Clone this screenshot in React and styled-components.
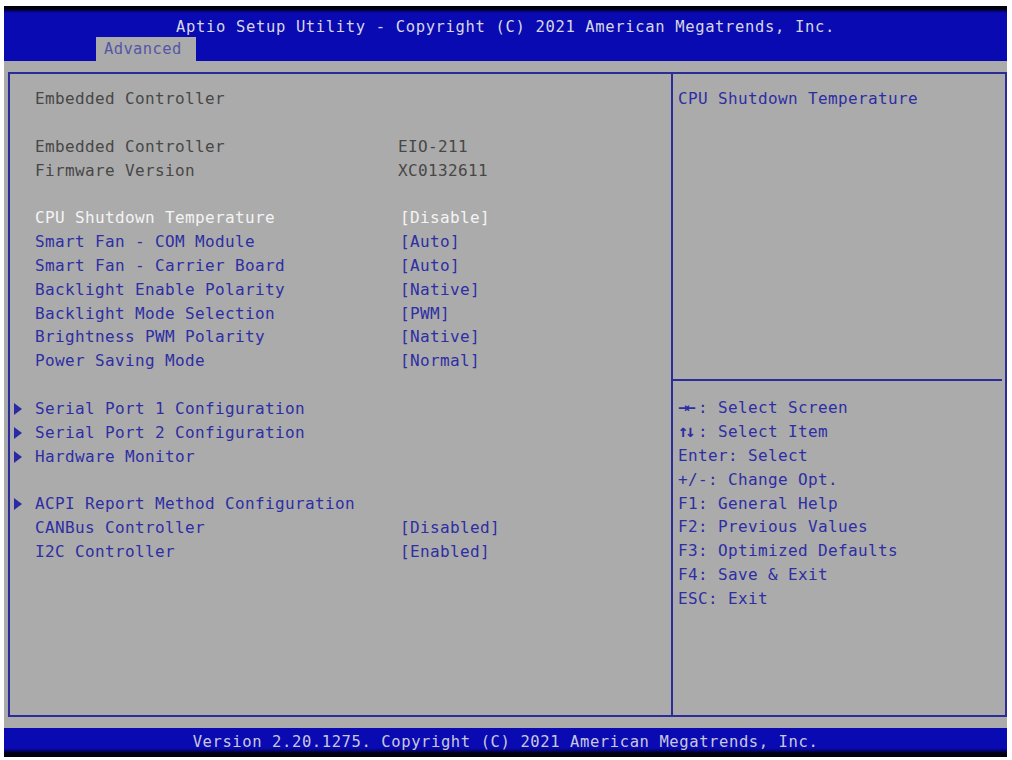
import React from 'react';
import styled, { createGlobalStyle } from 'styled-components';

const GlobalStyle = createGlobalStyle`
  html, body {
    margin: 0;
    padding: 0;
    background: #ffffff;
  }
  body {
    font-family: 'DejaVu Sans Mono', 'Liberation Mono', monospace;
  }
`;

const BLUE = '#0a0ab2';
const GRAY = '#ababab';
const LINE = '#2c2c98';

const Page = styled.div`
  width: 1012px;
  height: 760px;
  padding: 6px 5px 3px 4px;
  box-sizing: border-box;
  background: #fff;
`;

const Screen = styled.div`
  height: 100%;
  display: flex;
  flex-direction: column;
  background: ${GRAY};
  font-family: 'DejaVu Sans Mono', 'Liberation Mono', monospace;
  font-size: 16px;
  letter-spacing: 0.37px;
`;

const Header = styled.header`
  height: 55px;
  background: linear-gradient(#000008 0px, #000010 3px, #03036a 5px, ${BLUE} 7px, ${BLUE} 100%);
  display: flex;
  flex-direction: column;
`;

const Title = styled.div`
  height: 31px;
  line-height: 42px;
  text-align: center;
  color: #d6d6e6;
  font-size: 15.5px;
  letter-spacing: 0.65px;
`;

const TabRow = styled.div`
  flex: 1;
  display: flex;
  align-items: flex-end;
  padding-left: 92px;
`;

const Tab = styled.div`
  width: 100px;
  height: 24px;
  box-sizing: border-box;
  padding-left: 8px;
  line-height: 24px;
  background: ${GRAY};
  color: #5656a6;
  font-size: 15.5px;
`;

const Body = styled.main`
  flex: 1;
  padding: 11px 0 11px 4px;
`;

const Frame = styled.div`
  height: 100%;
  box-sizing: border-box;
  border: 2px solid ${LINE};
  display: grid;
  grid-template-columns: 663px 1fr;
`;

const MainPane = styled.section`
  border-right: 2px solid ${LINE};
  padding: 13px 0 0 0;
`;

const Row = styled.div`
  height: 23.85px;
  line-height: 23.85px;
  display: grid;
  grid-template-columns: 25px 361px 1fr;
  align-items: center;
  white-space: pre;
  color: ${(p) => (p.$selected ? '#f4f4f4' : p.$option ? '#2e2ea4' : '#474747')};
`;

const Arrow = styled.span`
  display: block;
  width: 0;
  height: 0;
  margin-left: 4px;
  border-top: 6px solid transparent;
  border-bottom: 6px solid transparent;
  border-left: 8px solid #2a2aa6;
`;

const Value = styled.span`
  padding-left: ${(p) => (p.$bracket ? '4px' : '2px')};
`;

const SidePane = styled.aside`
  display: flex;
  flex-direction: column;
`;

const HelpTop = styled.div`
  height: 307px;
  padding: 13px 0 0 5px;
  box-sizing: border-box;
  border-bottom: 2px solid ${LINE};
  margin-right: 3px;
  color: #2e2ea4;
  line-height: 23.85px;
`;

const KeyList = styled.div`
  padding: 15px 0 0 5px;
  color: #2e2ea4;
`;

const KeyLine = styled.div`
  height: 23.9px;
  line-height: 23.9px;
  white-space: pre;
`;

const Glyph = styled.span`
  display: inline-block;
  width: 20px;
  font-size: 17px;
  font-weight: bold;
  letter-spacing: -3px;
`;

const Footer = styled.footer`
  height: 29px;
  background: linear-gradient(${BLUE} 0px, ${BLUE} 20px, #03036a 23px, #000010 25px, #000008 29px);
  color: #c8c8dc;
  text-align: center;
  line-height: 29px;
  font-size: 15.5px;
  letter-spacing: 0.6px;
`;

const rows = [
  { label: 'Embedded Controller' },
  { blank: true },
  { label: 'Embedded Controller', value: 'EIO-211' },
  { label: 'Firmware Version', value: 'XC0132611' },
  { blank: true },
  { label: 'CPU Shutdown Temperature', value: '[Disable]', option: true, selected: true },
  { label: 'Smart Fan - COM Module', value: '[Auto]', option: true },
  { label: 'Smart Fan - Carrier Board', value: '[Auto]', option: true },
  { label: 'Backlight Enable Polarity', value: '[Native]', option: true },
  { label: 'Backlight Mode Selection', value: '[PWM]', option: true },
  { label: 'Brightness PWM Polarity', value: '[Native]', option: true },
  { label: 'Power Saving Mode', value: '[Normal]', option: true },
  { blank: true },
  { label: 'Serial Port 1 Configuration', option: true, sub: true },
  { label: 'Serial Port 2 Configuration', option: true, sub: true },
  { label: 'Hardware Monitor', option: true, sub: true },
  { blank: true },
  { label: 'ACPI Report Method Configuration', option: true, sub: true },
  { label: 'CANBus Controller', value: '[Disabled]', option: true },
  { label: 'I2C Controller', value: '[Enabled]', option: true },
];

const keys = [
  { glyph: '→←', text: ': Select Screen' },
  { glyph: '↑↓', text: ': Select Item' },
  { text: 'Enter: Select' },
  { text: '+/-: Change Opt.' },
  { text: 'F1: General Help' },
  { text: 'F2: Previous Values' },
  { text: 'F3: Optimized Defaults' },
  { text: 'F4: Save & Exit' },
  { text: 'ESC: Exit' },
];

export default function App() {
  return (
    <Page>
      <GlobalStyle />
      <Screen>
        <Header>
          <Title>Aptio Setup Utility - Copyright (C) 2021 American Megatrends, Inc.</Title>
          <TabRow>
            <Tab>Advanced</Tab>
          </TabRow>
        </Header>
        <Body>
          <Frame>
            <MainPane>
              {rows.map((r, i) =>
                r.blank ? (
                  <Row key={i} />
                ) : (
                  <Row key={i} $option={r.option} $selected={r.selected}>
                    <span>{r.sub ? <Arrow /> : null}</span>
                    <span>{r.label}</span>
                    {r.value ? <Value $bracket={r.value.startsWith('[')}>{r.value}</Value> : <span />}
                  </Row>
                )
              )}
            </MainPane>
            <SidePane>
              <HelpTop>CPU Shutdown Temperature</HelpTop>
              <KeyList>
                {keys.map((k, i) => (
                  <KeyLine key={i}>
                    {k.glyph ? <Glyph>{k.glyph}</Glyph> : null}
                    {k.text}
                  </KeyLine>
                ))}
              </KeyList>
            </SidePane>
          </Frame>
        </Body>
        <Footer>Version 2.20.1275. Copyright (C) 2021 American Megatrends, Inc.</Footer>
      </Screen>
    </Page>
  );
}
